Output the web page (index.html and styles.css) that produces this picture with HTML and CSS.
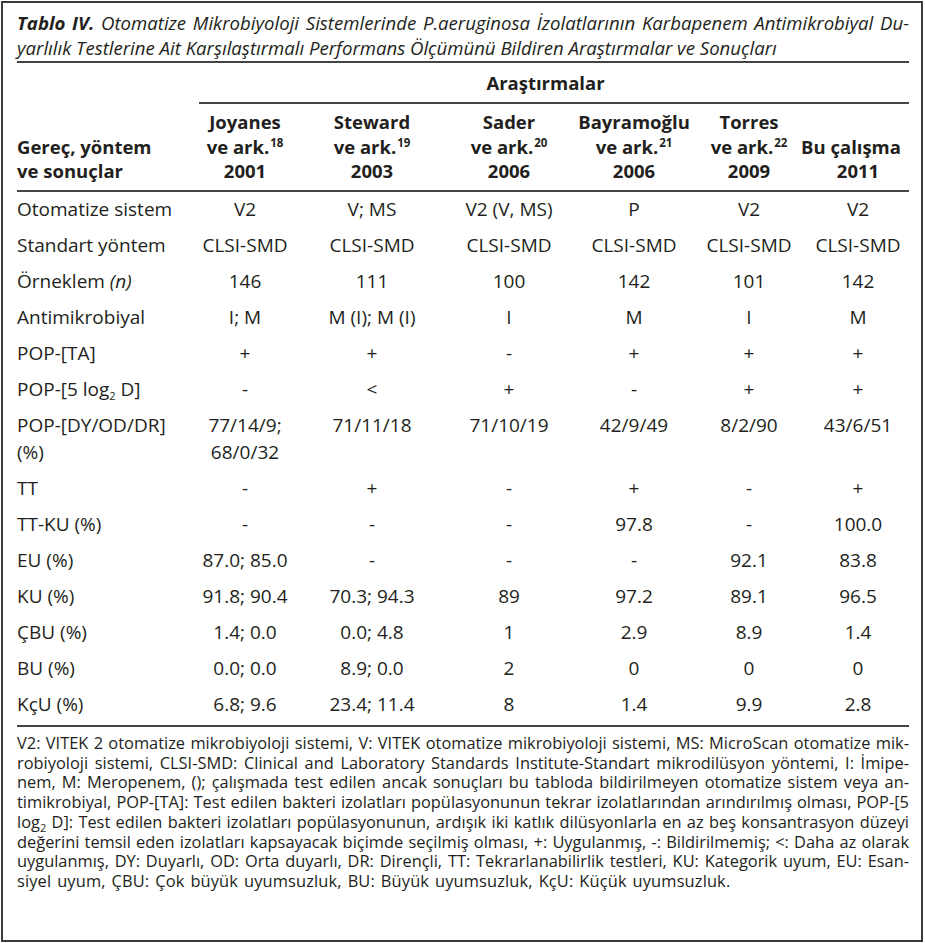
FILE: index.html
```html
<!DOCTYPE html>
<html lang="tr">
<head>
<meta charset="utf-8">
<title>Tablo IV</title>
<link rel="stylesheet" href="styles.css">
</head>
<body>
<div class="frame">
  <div class="caption">
    <div class="cap-line just"><b>Tablo IV.</b> Otomatize Mikrobiyoloji Sistemlerinde P.aeruginosa İzolatlarının Karbapenem Antimikrobiyal Du-</div>
    <div class="cap-line">yarlılık Testlerine Ait Karşılaştırmalı Performans Ölçümünü Bildiren Araştırmalar ve Sonuçları</div>
  </div>
  <div class="rule rule-cap"></div>
  <div class="group-head">Araştırmalar</div>
  <div class="rule rule-sub"></div>

  <div class="cols head">
    <div class="hl"><span>Gereç, yöntem</span><span>ve sonuçlar</span></div>
    <div class="c"><span>Joyanes</span><span>ve ark.<sup>18</sup></span><span>2001</span></div>
    <div class="c"><span>Steward</span><span>ve ark.<sup>19</sup></span><span>2003</span></div>
    <div class="c"><span>Sader</span><span>ve ark.<sup>20</sup></span><span>2006</span></div>
    <div class="c"><span>Bayramoğlu</span><span>ve ark.<sup>21</sup></span><span>2006</span></div>
    <div class="c"><span>Torres</span><span>ve ark.<sup>22</sup></span><span>2009</span></div>
    <div class="c"><span class="shift">Bu çalışma</span><span>2011</span></div>
  </div>
  <div class="rule"></div>

  <div class="body">
    <div class="cols row"><div class="lab">Otomatize sistem</div><div class="c">V2</div><div class="c">V; MS</div><div class="c">V2 (V, MS)</div><div class="c">P</div><div class="c">V2</div><div class="c">V2</div></div>
    <div class="cols row"><div class="lab">Standart yöntem</div><div class="c">CLSI-SMD</div><div class="c">CLSI-SMD</div><div class="c">CLSI-SMD</div><div class="c">CLSI-SMD</div><div class="c">CLSI-SMD</div><div class="c">CLSI-SMD</div></div>
    <div class="cols row"><div class="lab">Örneklem <i>(n)</i></div><div class="c">146</div><div class="c">111</div><div class="c">100</div><div class="c">142</div><div class="c">101</div><div class="c">142</div></div>
    <div class="cols row"><div class="lab">Antimikrobiyal</div><div class="c">I; M</div><div class="c">M (I); M (I)</div><div class="c">I</div><div class="c">M</div><div class="c">I</div><div class="c">M</div></div>
    <div class="cols row"><div class="lab">POP-[TA]</div><div class="c">+</div><div class="c">+</div><div class="c">-</div><div class="c">+</div><div class="c">+</div><div class="c">+</div></div>
    <div class="cols row"><div class="lab">POP-[5 log<sub>2</sub> D]</div><div class="c">-</div><div class="c">&lt;</div><div class="c">+</div><div class="c">-</div><div class="c">+</div><div class="c">+</div></div>
    <div class="cols row"><div class="lab"><span class="ln">POP-[DY/OD/DR]</span><span class="ln">(%)</span></div><div class="c"><span>77/14/9;</span><span>68/0/32</span></div><div class="c">71/11/18</div><div class="c">71/10/19</div><div class="c">42/9/49</div><div class="c">8/2/90</div><div class="c">43/6/51</div></div>
    <div class="cols row"><div class="lab">TT</div><div class="c">-</div><div class="c">+</div><div class="c">-</div><div class="c">+</div><div class="c">-</div><div class="c">+</div></div>
    <div class="cols row"><div class="lab">TT-KU (%)</div><div class="c">-</div><div class="c">-</div><div class="c">-</div><div class="c">97.8</div><div class="c">-</div><div class="c">100.0</div></div>
    <div class="cols row"><div class="lab">EU (%)</div><div class="c">87.0; 85.0</div><div class="c">-</div><div class="c">-</div><div class="c">-</div><div class="c">92.1</div><div class="c">83.8</div></div>
    <div class="cols row"><div class="lab">KU (%)</div><div class="c">91.8; 90.4</div><div class="c">70.3; 94.3</div><div class="c">89</div><div class="c">97.2</div><div class="c">89.1</div><div class="c">96.5</div></div>
    <div class="cols row"><div class="lab">ÇBU (%)</div><div class="c">1.4; 0.0</div><div class="c">0.0; 4.8</div><div class="c">1</div><div class="c">2.9</div><div class="c">8.9</div><div class="c">1.4</div></div>
    <div class="cols row"><div class="lab">BU (%)</div><div class="c">0.0; 0.0</div><div class="c">8.9; 0.0</div><div class="c">2</div><div class="c">0</div><div class="c">0</div><div class="c">0</div></div>
    <div class="cols row"><div class="lab">KçU (%)</div><div class="c">6.8; 9.6</div><div class="c">23.4; 11.4</div><div class="c">8</div><div class="c">1.4</div><div class="c">9.9</div><div class="c">2.8</div></div>
  </div>
  <div class="rule"></div>

  <div class="notes">
    <div class="note-line just">V2: VITEK 2 otomatize mikrobiyoloji sistemi, V: VITEK otomatize mikrobiyoloji sistemi, MS: MicroScan otomatize mik-</div>
    <div class="note-line just">robiyoloji sistemi, CLSI-SMD: Clinical and Laboratory Standards Institute-Standart mikrodilüsyon yöntemi, I: İmipe-</div>
    <div class="note-line just">nem, M: Meropenem, (); çalışmada test edilen ancak sonuçları bu tabloda bildirilmeyen otomatize sistem veya an-</div>
    <div class="note-line just">timikrobiyal, POP-[TA]: Test edilen bakteri izolatları popülasyonunun tekrar izolatlarından arındırılmış olması, POP-[5</div>
    <div class="note-line just">log<sub>2</sub> D]: Test edilen bakteri izolatları popülasyonunun, ardışık iki katlık dilüsyonlarla en az beş konsantrasyon düzeyi</div>
    <div class="note-line just">değerini temsil eden izolatları kapsayacak biçimde seçilmiş olması, +: Uygulanmış, -: Bildirilmemiş; &lt;: Daha az olarak</div>
    <div class="note-line just">uygulanmış, DY: Duyarlı, OD: Orta duyarlı, DR: Dirençli, TT: Tekrarlanabilirlik testleri, KU: Kategorik uyum, EU: Esan-</div>
    <div class="note-line last">siyel uyum, ÇBU: Çok büyük uyumsuzluk, BU: Büyük uyumsuzluk, KçU: Küçük uyumsuzluk.</div>
  </div>
</div>
</body>
</html>
```

FILE: styles.css
```css
html, body {
  margin: 0;
  padding: 0;
  background: #ffffff;
}

.frame {
  margin: 1px;
  width: 922px;
  height: 941px;
  box-sizing: border-box;
  border: 2px solid #3a3a3a;
  padding: 7px 12px 0 14px;
  font-family: "Open Sans", "Noto Sans", sans-serif;
  color: #231f20;
  font-size: 19px;
}

.caption {
  font-style: italic;
  font-size: 18.6px;
  line-height: 25px;
}

.just {
  text-align: justify;
  text-align-last: justify;
}

.rule {
  height: 2px;
  background: #444444;
}

.rule-cap {
  margin-top: 1px;
}

.rule-sub {
  margin-left: 182px;
}

.group-head {
  font-weight: bold;
  font-size: 18.5px;
  line-height: 39px;
  padding-left: 165px;
  text-align: center;
}

.cols {
  display: grid;
  grid-template-columns: 165px 126px 128px 146px 104px 126px 92px;
}

.head {
  font-weight: bold;
  font-size: 18.5px;
  line-height: 24.5px;
  padding: 6px 0 6.5px;
  align-items: end;
}

.body {
  padding-bottom: 2px;
}

.row {
  line-height: 27px;
  padding: 4px 0 5px;
}

.c {
  display: flex;
  flex-direction: column;
  align-items: center;
  white-space: nowrap;
}

.hl {
  display: flex;
  flex-direction: column;
  align-items: flex-start;
  white-space: nowrap;
}

.lab {
  display: block;
  white-space: nowrap;
}

.ln {
  display: block;
}

.shift {
  margin-right: 14px;
}

sup {
  font-size: 11.5px;
  line-height: 0;
  vertical-align: 7px;
  margin-left: 1px;
}

sub {
  font-size: 11px;
  line-height: 0;
  vertical-align: -4px;
}

.notes {
  padding-top: 6px;
  font-size: 16.4px;
  line-height: 19.7px;
}

.last {
  letter-spacing: 0.15px;
  word-spacing: 1.5px;
}
```
